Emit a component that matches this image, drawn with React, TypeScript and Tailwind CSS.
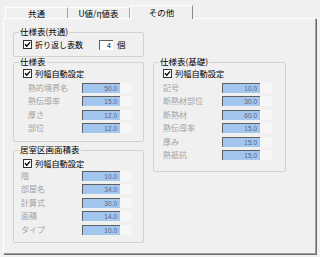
import React from "react"

const jp = { fontFamily: '"Noto Sans CJK JP", "Noto Sans", sans-serif' }

function Check() {
  return (
    <svg width="9" height="9" viewBox="0 0 9 9" className="shrink-0">
      <rect x="0.5" y="0.5" width="8" height="8" fill="#fff" stroke="#333" />
      <path d="M2 4.2 L3.8 6.2 L7 2.4" fill="none" stroke="#000" strokeWidth="1.3" />
    </svg>
  )
}

function Group({ title, className, children }: { title: string; className: string; children: React.ReactNode }) {
  return (
    <div className={"relative border border-[#d2d2d2] rounded-[2px] " + className}>
      <span className="absolute -top-[6px] left-[5px] bg-[#f0f0f0] px-[1px] text-[8.5px] leading-[9px] text-black">
        {title}
      </span>
      {children}
    </div>
  )
}

function AutoWidth() {
  return (
    <div className="flex items-center h-[10px] pl-[9px] gap-[3px]">
      <Check />
      <span className="text-[8.2px] leading-[10px] text-black">列幅自動設定</span>
    </div>
  )
}

function Row({ label, value, pl, lw }: { label: string; value: string; pl: string; lw: string }) {
  return (
    <div className={"flex items-center h-[13.5px] " + pl}>
      <span className={"text-[8px] leading-[10px] text-[#a3a3a3] " + lw}>{label}</span>
      <div className="flex h-[10px]">
        <div
          className="w-[38px] h-[10px] bg-[#a3c6ef] border-l border-t border-[#5f5f5f] text-right pr-[3px] text-[6.5px] leading-[9px] text-[#55657c]"
          style={{ fontFamily: '"Liberation Sans", sans-serif' }}
        >
          {value}
        </div>
        <div className="w-[12px] h-[10px] bg-[#f6f6f6]" />
      </div>
    </div>
  )
}

export default function App() {
  return (
    <div className="w-[320px] h-[257px] bg-[#f0f0f0] overflow-hidden" style={jp}>
      <div className="pt-[5px] pl-[3px]">
        <div className="flex items-end h-[13px] pl-[2px]">
          <div className="w-[63px] h-[11px] border-t border-l border-white border-r border-r-[#a0a0a0] text-center text-[8.5px] leading-[11px] text-black">
            共通
          </div>
          <div className="w-[62px] h-[11px] border-t border-white border-r border-r-[#a0a0a0] text-center text-[8.5px] leading-[11px] text-black">
            U値/η値表
          </div>
          <div className="relative z-10 -mb-[1px] w-[63px] h-[14px] bg-[#f0f0f0] border-t border-l border-white border-r border-r-[#8a8a8a] text-center text-[8.5px] leading-[12px] text-black">
            その他
          </div>
        </div>
        <div className="w-[313px] h-[236px] border-t border-l border-white border-r border-b border-r-[#a0a0a0] border-b-[#a0a0a0] shadow-[1px_1px_0_#6a6a6a] pl-[9px] pt-[13px]">
          <Group title="仕様表(共通)" className="w-[131px] h-[25px]">
            <div className="flex items-center h-[11px] pl-[9px] mt-[6px]">
              <div className="flex items-center gap-[3px] w-[76px]">
                <Check />
                <span className="text-[8px] leading-[11px] text-black">折り返し表数</span>
              </div>
              <div className="w-[14px] h-[10px] bg-white border-l border-t border-[#5f5f5f] text-right pr-[2px] text-[7px] leading-[9px] text-black" style={{ fontFamily: '"Liberation Sans", sans-serif' }}>
                4
              </div>
              <span className="ml-[4px] text-[8.5px] leading-[11px] text-black">個</span>
            </div>
          </Group>
          <div className="flex gap-[9px] mt-[5px]">
            <div className="flex flex-col gap-[8px]">
              <Group title="仕様表" className="w-[131px] h-[80px] pt-[5px]">
                <AutoWidth />
                <div className="mt-[3px]">
                  <Row label="熱的境界名" value="50.0" pl="pl-[14px]" lw="w-[54px]" />
                  <Row label="熱伝導率" value="15.0" pl="pl-[14px]" lw="w-[54px]" />
                  <Row label="厚さ" value="12.0" pl="pl-[14px]" lw="w-[54px]" />
                  <Row label="部位" value="12.0" pl="pl-[14px]" lw="w-[54px]" />
                </div>
              </Group>
              <Group title="居室区画面積表" className="w-[131px] h-[93px] pt-[7px]">
                <AutoWidth />
                <div className="mt-[1px]">
                  <Row label="階" value="10.0" pl="pl-[7px]" lw="w-[61px]" />
                  <Row label="部屋名" value="34.0" pl="pl-[7px]" lw="w-[61px]" />
                  <Row label="計算式" value="30.0" pl="pl-[7px]" lw="w-[61px]" />
                  <Row label="面積" value="14.0" pl="pl-[7px]" lw="w-[61px]" />
                  <Row label="タイプ" value="10.0" pl="pl-[7px]" lw="w-[61px]" />
                </div>
              </Group>
            </div>
            <Group title="仕様表(基礎)" className="w-[133px] h-[110px] pt-[5px]">
              <AutoWidth />
              <div className="mt-[3px]">
                <Row label="記号" value="10.0" pl="pl-[9px]" lw="w-[59px]" />
                <Row label="断熱材部位" value="30.0" pl="pl-[9px]" lw="w-[59px]" />
                <Row label="断熱材" value="60.0" pl="pl-[9px]" lw="w-[59px]" />
                <Row label="熱伝導率" value="15.0" pl="pl-[9px]" lw="w-[59px]" />
                <Row label="厚み" value="15.0" pl="pl-[9px]" lw="w-[59px]" />
                <Row label="熱抵抗" value="15.0" pl="pl-[9px]" lw="w-[59px]" />
              </div>
            </Group>
          </div>
        </div>
      </div>
    </div>
  )
}
